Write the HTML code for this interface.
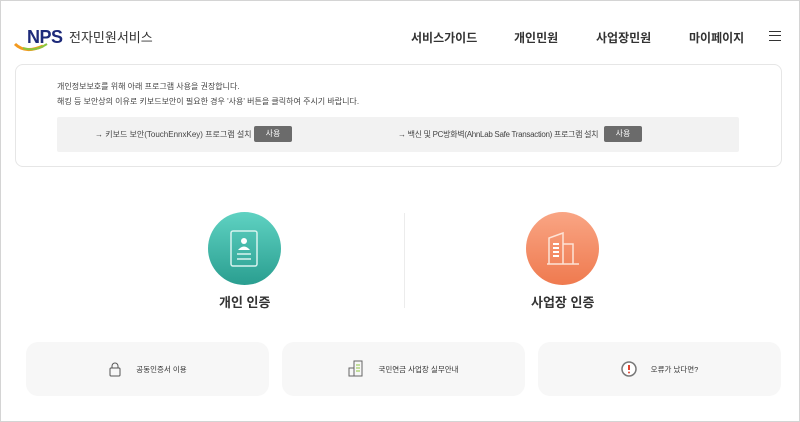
<!DOCTYPE html>
<html><head><meta charset="utf-8"><style>
*{margin:0;padding:0;box-sizing:border-box}
body{width:800px;height:422px;background:#fff;font-family:"Liberation Sans","Noto Sans CJK KR",sans-serif;position:relative;overflow:hidden;color:#333}
.frame{position:absolute;left:0;top:0;width:800px;height:422px;border:1px solid #d4d4d4}
.a{position:absolute}
.nav{font-size:12px;font-weight:bold;color:#333;top:29px}
.box{left:15px;top:64px;width:767px;height:103px;border:1px solid #e6e6e6;border-radius:8px}
.t{font-size:8px;color:#444}
.bar{left:57px;top:117px;width:682px;height:35px;background:#f2f2f2;border-radius:2px}
.btn{background:#6b6b6b;color:#fff;font-size:8px;width:38px;height:16px;border-radius:2px;text-align:center;line-height:16px}
.circ{width:73px;height:73px;border-radius:50%}
.lab{font-size:13px;font-weight:bold;color:#333;top:292px}
.card{top:342px;height:54px;width:243px;background:#f7f7f7;border-radius:12px;font-size:7.5px;color:#333;display:flex;align-items:center;justify-content:center;gap:14px}
</style></head><body>
<div class="frame"></div>
<svg class="a" style="left:13px;top:24px" width="60" height="30"><path d="M2 20 Q12 30 30 22" stroke="#f39a1f" stroke-width="3" fill="none"/><path d="M10 24 Q22 28 34 20" stroke="#8cc63f" stroke-width="2" fill="none"/>
<text x="14" y="19" font-family="Liberation Sans" font-weight="bold" font-size="18" fill="#1d2a7a" letter-spacing="-0.5">NPS</text></svg>
<div class="a" style="left:69px;top:27px;font-size:13px;color:#333">전자민원서비스</div>
<div class="a nav" style="left:411px">서비스가이드</div>
<div class="a nav" style="left:514px">개인민원</div>
<div class="a nav" style="left:596px">사업장민원</div>
<div class="a nav" style="left:689px">마이페이지</div>
<div class="a" style="left:769px;top:31px;width:12px;height:10px;border-top:1.5px solid #333;border-bottom:1.5px solid #333"><div style="margin-top:3px;border-top:1.5px solid #333"></div></div>
<div class="a box"></div>
<div class="a t" style="left:57px;top:81px">개인정보보호를 위해 아래 프로그램 사용을 권장합니다.</div>
<div class="a t" style="left:57px;top:96px">해킹 등 보안상의 이유로 키보드보안이 필요한 경우 '사용' 버튼을 클릭하여 주시기 바랍니다.</div>
<div class="a bar"></div>
<div class="a t" style="left:95px;top:129px">→ 키보드 보안(TouchEnnxKey) 프로그램 설치</div>
<div class="a btn" style="left:254px;top:126px">사용</div>
<div class="a t" style="left:398px;top:129px;letter-spacing:-0.3px">→ 백신 및 PC방화벽(AhnLab Safe Transaction) 프로그램 설치</div>
<div class="a btn" style="left:604px;top:126px">사용</div>
<div class="a circ" style="left:208px;top:212px;background:linear-gradient(#5fd2c2,#2a9e90)"></div>
<svg class="a" style="left:229px;top:229px" width="30" height="40"><rect x="2" y="2" width="26" height="35" rx="2" fill="none" stroke="#d8f3ef" stroke-width="1.5"/><circle cx="15" cy="12" r="3" fill="#fff"/><path d="M9 21 Q15 14 21 21Z" fill="#fff"/><path d="M8 25h14M8 30h14" stroke="#d8f3ef" stroke-width="1.5"/></svg>
<div class="a circ" style="left:526px;top:212px;background:linear-gradient(#f9a584,#ef7a4f)"></div>
<svg class="a" style="left:545px;top:230px" width="36" height="38"><path d="M4 34V8l14-5v31M18 14h10v20M2 34h32" stroke="#fde3d6" stroke-width="1.5" fill="none"/><path d="M8 14h6M8 18h6M8 22h6M8 26h6" stroke="#fff" stroke-width="2"/></svg>
<div class="a" style="left:404px;top:213px;width:1px;height:95px;background:#ececec"></div>
<div class="a lab" style="left:219px">개인 인증</div>
<div class="a lab" style="left:531px">사업장 인증</div>
<div class="a card" style="left:26px"><svg width="14" height="16"><path d="M4 7V5a3 3 0 016 0v2" stroke="#555" fill="none"/><rect x="2" y="7" width="10" height="8" rx="1" fill="none" stroke="#555"/></svg><span>공동인증서 이용</span></div>
<div class="a card" style="left:282px"><svg width="16" height="18"><rect x="6" y="1" width="8" height="15" fill="none" stroke="#666"/><rect x="1" y="8" width="5" height="8" fill="none" stroke="#666"/><path d="M8 5h4M8 8h4M8 11h4" stroke="#8cc63f"/></svg><span>국민연금 사업장 실무안내</span></div>
<div class="a card" style="left:538px"><svg width="16" height="16"><circle cx="8" cy="8" r="7" fill="#fff" stroke="#777" stroke-width="1.5"/><path d="M8 4v5" stroke="#e2432f" stroke-width="2"/><circle cx="8" cy="11.5" r="1" fill="#e2432f"/></svg><span>오류가 났다면?</span></div>
</body></html>
